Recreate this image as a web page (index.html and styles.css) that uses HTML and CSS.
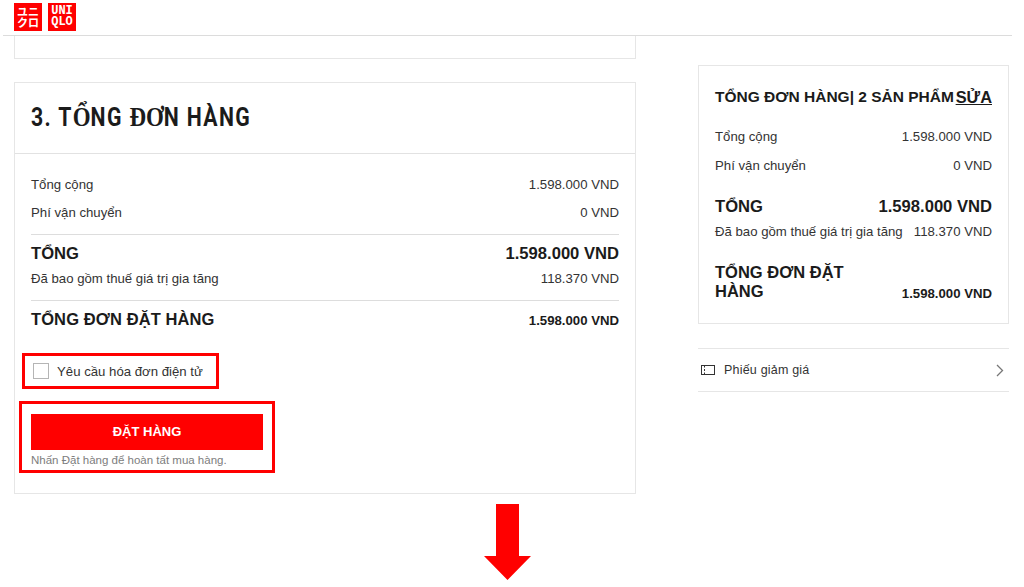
FILE: index.html
```html
<!DOCTYPE html>
<html lang="vi">
<head>
<meta charset="utf-8">
<title>Tổng đơn hàng</title>
<link rel="stylesheet" href="styles.css">
</head>
<body>
<header class="topbar">
  <div class="logo logo-kana">ユニクロ</div>
  <div class="logo logo-latin">UNIQLO</div>
</header>
<main class="page">
  <section class="left">
    <div class="card stub"></div>
    <div class="card order">
      <h1 class="order-title"><span class="title-text">3. T<span class="serif">Ổ</span>NG <span class="serif">ĐƠ</span>N HÀNG</span></h1>
      <div class="order-body">
        <div class="row row-first"><span>Tổng cộng</span><span>1.598.000 VND</span></div>
        <div class="row row-ship"><span>Phí vận chuyển</span><span>0 VND</span></div>
        <div class="row row-total"><span>TỔNG</span><span>1.598.000 VND</span></div>
        <div class="row row-tax"><span>Đã bao gồm thuế giá trị gia tăng</span><span>118.370 VND</span></div>
        <div class="row row-grand"><span class="grand-label">TỔNG ĐƠN ĐẶT HÀNG</span><span class="grand-value">1.598.000 VND</span></div>
        <label class="invoice mark"><span class="checkbox"></span><span>Yêu cầu hóa đơn điện tử</span></label>
        <div class="place mark">
          <button class="place-btn" type="button">ĐẶT HÀNG</button>
          <p class="place-note">Nhấn Đặt hàng để hoàn tất mua hàng.</p>
        </div>
      </div>
    </div>
  </section>
  <aside class="right">
    <div class="card summary">
      <div class="summary-head"><span>TỔNG ĐƠN HÀNG| 2 SẢN PHẨM</span><a class="edit">SỬA</a></div>
      <div class="srow s-first"><span>Tổng cộng</span><span>1.598.000 VND</span></div>
      <div class="srow s-ship"><span>Phí vận chuyển</span><span>0 VND</span></div>
      <div class="srow s-total"><span>TỔNG</span><span>1.598.000 VND</span></div>
      <div class="srow s-tax"><span>Đã bao gồm thuế giá trị gia tăng</span><span>118.370 VND</span></div>
      <div class="srow s-grand"><span class="s-grand-label">TỔNG ĐƠN ĐẶT HÀNG</span><span class="grand-value">1.598.000 VND</span></div>
    </div>
    <div class="coupon">
      <svg class="coupon-icon" width="16" height="12" viewBox="0 0 16 12" fill="none" stroke="#333" stroke-width="1"><rect x="1.500" y="1.500" width="13" height="9"/><path d="M4.500 2v1.500M4.500 5v2M4.500 8.500V10"/></svg>
      <span class="coupon-label">Phiếu giảm giá</span>
      <svg class="chevron" width="8" height="13" viewBox="0 0 8 13" fill="none" stroke="#777" stroke-width="1.300"><path d="M1 1l5.500 5.500L1 12"/></svg>
    </div>
  </aside>
</main>
<svg class="arrow" width="47" height="76" viewBox="0 0 47 76"><path d="M12 0h23v52h12L23.500 76 0 52h12z" fill="#f00"/></svg>
</body>
</html>
```
FILE: styles.css
```css
* { box-sizing: border-box; }
html, body { margin: 0; height: 587px; overflow: hidden; background: #fff; }
body { font-family: "Liberation Sans", Arial, sans-serif; color: #1b1b1b; position: relative; }

.topbar { height: 36px; margin: 0 12px 0 3px; padding: 3px 0 0 11px; border-bottom: 1px solid #dcdcdc; display: flex; gap: 6px; }
.logo { width: 28px; height: 28px; background: #f00; color: #fff; text-align: center; font-weight: 700; word-break: break-all; }
.logo-kana { font-family: "Noto Sans CJK JP", sans-serif; font-size: 11px; line-height: 11px; padding: 3px 3px 0; }
.logo-latin { font-family: "Liberation Mono", monospace; font-size: 12px; line-height: 11px; padding: 3px 3px 0; }

.page { display: flex; align-items: flex-start; padding-left: 14px; }
.left { width: 622px; }
.right { width: 311px; margin-left: 62px; padding-top: 29px; }
.card { border: 1px solid #e6e6e6; background: #fff; }
.stub { height: 23px; border-top: 0; margin-bottom: 23px; }
.order { height: 412px; }
.order-title { margin: 0; height: 71px; padding: 19px 16px 0; border-bottom: 1px solid #e2e2e2; font-family: "Roboto", sans-serif; font-size: 25px; line-height: 30px; font-weight: 700; letter-spacing: 1.6px; color: #1b1b1b; white-space: nowrap; }
.title-text { display: inline-block; transform: scaleX(.85); transform-origin: left center; }
.serif { font-family: "Liberation Serif", serif; font-size: 27px; letter-spacing: 0; }
.order-body { padding: 0 16px; }

.row { display: flex; justify-content: space-between; align-items: baseline; font-size: 13.200px; color: #333; }
.row-first { margin-top: 22px; height: 18px; line-height: 18px; }
.row-ship { margin-top: 10px; height: 22px; line-height: 18px; }
.row-total { margin-top: 8px; height: 39px; padding-top: 9px; border-top: 1px solid #ddd; font-size: 16.600px; line-height: 20px; font-weight: 700; color: #1b1b1b; }
.row-tax { margin-top: -3px; height: 21px; line-height: 18px; }
.row-grand { margin-top: 9px; padding-top: 8px; height: 46px; border-top: 1px solid #ddd; line-height: 20px; }
.grand-label { font-size: 16.500px; font-weight: 700; color: #1b1b1b; letter-spacing: .1px; }
.grand-value { font-size: 13.200px; font-weight: 700; color: #1b1b1b; }

.mark { border: 3px solid #f00; }
.invoice { display: flex; align-items: center; gap: 8px; width: 197px; height: 36px; margin: 7px 0 0 -9px; padding-left: 8px; font-size: 13.200px; color: #333; }
.checkbox { width: 16px; height: 16px; border: 1px solid #b5b5b5; background: #fff; }
.place { width: 256px; height: 72px; margin: 12px 0 0 -12px; padding: 10px 0 0 9px; }
.place-btn { display: block; width: 232px; height: 36px; border: 0; padding: 0 0 2px; background: #f00; color: #fff; font-family: inherit; font-size: 13px; font-weight: 700; }
.place-note { margin: 3px 0 0; font-size: 11.500px; line-height: 14px; color: #7d7d7d; white-space: nowrap; }

.summary { height: 259px; padding: 21px 16px 0; }
.summary-head { display: flex; justify-content: space-between; font-size: 15.500px; line-height: 20px; font-weight: 700; white-space: nowrap; color: #1b1b1b; }
.edit { font-size: 16.400px; text-decoration: underline; }
.srow { display: flex; justify-content: space-between; align-items: baseline; font-size: 13.200px; line-height: 18px; color: #333; white-space: nowrap; }
.s-first { margin-top: 21px; }
.s-ship { margin-top: 11px; }
.s-total { margin-top: 22px; font-size: 16.600px; line-height: 20px; font-weight: 700; color: #1b1b1b; }
.s-tax { margin-top: 6px; }
.s-grand { margin-top: 22px; align-items: flex-end; white-space: normal; }
.s-grand-label { width: 150px; font-size: 16.500px; line-height: 19px; font-weight: 700; color: #1b1b1b; }
.s-grand .grand-value { line-height: 14px; white-space: nowrap; }

.coupon { display: flex; align-items: center; height: 44px; margin-top: 24px; padding: 0 5px 0 2px; border-top: 1px solid #e6e6e6; border-bottom: 1px solid #e6e6e6; }
.coupon-icon { flex: none; }
.coupon-label { flex: 1; margin-left: 8px; font-size: 12.500px; letter-spacing: .2px; color: #333; }

.arrow { position: absolute; left: 484px; top: 504px; }
```
